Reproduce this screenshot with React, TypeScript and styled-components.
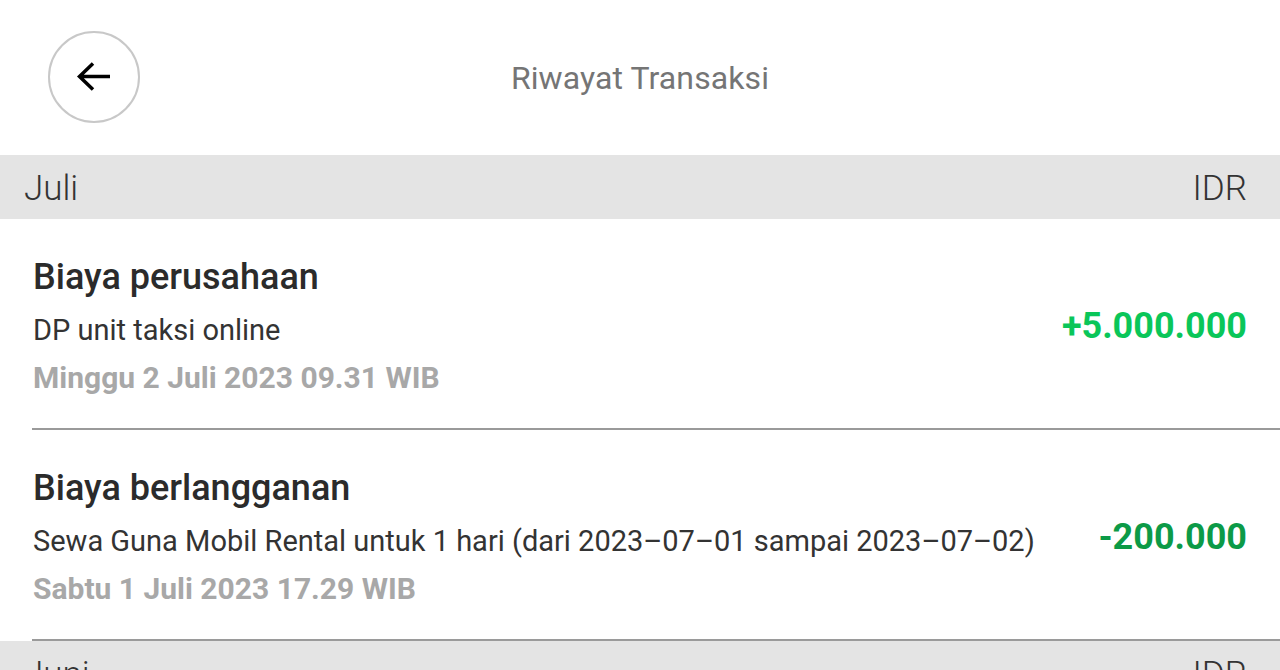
import styled, { createGlobalStyle } from "styled-components";

const GlobalStyle = createGlobalStyle`
  html, body {
    margin: 0;
    padding: 0;
    background: #ffffff;
    font-family: "Roboto", "Liberation Sans", sans-serif;
  }
`;

const Page = styled.div`
  width: 1280px;
  height: 670px;
  overflow: hidden;
  background: #ffffff;
`;

const Header = styled.header`
  position: relative;
  height: 155px;
  display: flex;
  align-items: center;
  justify-content: center;
`;

const BackButton = styled.button`
  position: absolute;
  left: 48px;
  top: 31px;
  width: 92px;
  height: 92px;
  border-radius: 50%;
  border: 2px solid #c8c8c8;
  background: #ffffff;
  display: flex;
  align-items: center;
  justify-content: center;
  padding: 0;
  cursor: pointer;
`;

const Title = styled.h1`
  margin: 0;
  font-size: 32px;
  font-weight: 400;
  color: #757575;
  letter-spacing: 0.1px;
`;

const MonthBar = styled.div`
  height: 64px;
  flex-shrink: 0;
  background: #e4e4e4;
  display: flex;
  align-items: center;
  justify-content: space-between;
  padding: 2px 33px 0 24px;
  box-sizing: border-box;
  font-size: 35px;
  font-weight: 300;
  color: #333333;
`;

const Item = styled.div`
  display: flex;
  align-items: center;
  justify-content: space-between;
  margin-left: 32px;
  padding: 36px 33px 25px 1px;
  border-bottom: 2px solid #9a9a9a;
`;

const Info = styled.div`
  display: flex;
  flex-direction: column;
`;

const ItemTitle = styled.div`
  font-size: 36px;
  font-weight: 500;
  color: #2b2b2b;
  line-height: 44px;
`;

const Desc = styled.div`
  margin-top: 8px;
  font-size: 29px;
  font-weight: 400;
  color: #333333;
  line-height: 46px;
`;

const DateText = styled.div`
  font-size: 30px;
  font-weight: 700;
  color: #a8a8a8;
  line-height: 50px;
`;

const Amount = styled.div<{ $positive: boolean }>`
  font-size: 36px;
  font-weight: 700;
  color: ${(p) => (p.$positive ? "#0ac659" : "#0c9a47")};
  white-space: nowrap;
  margin-left: 24px;
  padding-bottom: 6px;
`;

type Tx = {
  title: string;
  desc: string;
  date: string;
  amount: string;
  positive: boolean;
};

const julyTx: Tx[] = [
  {
    title: "Biaya perusahaan",
    desc: "DP unit taksi online",
    date: "Minggu 2 Juli 2023 09.31 WIB",
    amount: "+5.000.000",
    positive: true,
  },
  {
    title: "Biaya berlangganan",
    desc: "Sewa Guna Mobil Rental untuk 1 hari (dari 2023–07–01 sampai 2023–07–02)",
    date: "Sabtu 1 Juli 2023 17.29 WIB",
    amount: "-200.000",
    positive: false,
  },
];

const ArrowLeft = () => (
  <svg width="40" height="40" viewBox="0 0 40 40" fill="none">
    <path
      d="M36 19.5H6M19 6.5L5.5 19.5L19 32.5"
      stroke="#000"
      strokeWidth="3.5"
      strokeLinecap="butt"
      strokeLinejoin="miter"
    />
  </svg>
);

export default function App() {
  return (
    <Page>
      <GlobalStyle />
      <Header>
        <BackButton aria-label="Kembali">
          <ArrowLeft />
        </BackButton>
        <Title>Riwayat Transaksi</Title>
      </Header>

      <MonthBar>
        <span>Juli</span>
        <span>IDR</span>
      </MonthBar>
      {julyTx.map((tx) => (
        <Item key={tx.title}>
          <Info>
            <ItemTitle>{tx.title}</ItemTitle>
            <Desc>{tx.desc}</Desc>
            <DateText>{tx.date}</DateText>
          </Info>
          <Amount $positive={tx.positive}>{tx.amount}</Amount>
        </Item>
      ))}

      <MonthBar>
        <span>Juni</span>
        <span>IDR</span>
      </MonthBar>
    </Page>
  );
}
